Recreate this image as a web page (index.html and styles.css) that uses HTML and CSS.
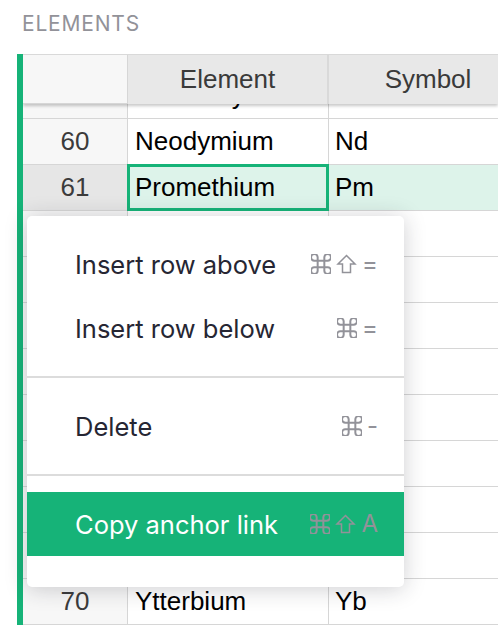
FILE: index.html
```html
<!DOCTYPE html>
<html>
<head>
<meta charset="utf-8">
<link rel="stylesheet" href="styles.css">
</head>
<body>
<div class="page">
  <div class="title">ELEMENTS</div>
  <div class="grid">
    <div class="header">
      <div class="rownum"></div>
      <div class="col col-el">Element</div>
      <div class="col col-sym">Symbol</div>
    </div>
    <div class="body">
      <div class="row row-partial"><div class="rownum">59</div><div class="cell col-el">Praseodymium</div><div class="cell col-sym">Pr</div></div>
      <div class="row"><div class="rownum">60</div><div class="cell col-el">Neodymium</div><div class="cell col-sym">Nd</div></div>
      <div class="row row-active"><div class="rownum">61</div><div class="cell col-el cell-cursor">Promethium</div><div class="cell col-sym">Pm</div></div>
      <div class="row"><div class="rownum">62</div><div class="cell col-el">Samarium</div><div class="cell col-sym">Sm</div></div>
      <div class="row"><div class="rownum">63</div><div class="cell col-el">Europium</div><div class="cell col-sym">Eu</div></div>
      <div class="row"><div class="rownum">64</div><div class="cell col-el">Gadolinium</div><div class="cell col-sym">Gd</div></div>
      <div class="row"><div class="rownum">65</div><div class="cell col-el">Terbium</div><div class="cell col-sym">Tb</div></div>
      <div class="row"><div class="rownum">66</div><div class="cell col-el">Dysprosium</div><div class="cell col-sym">Dy</div></div>
      <div class="row"><div class="rownum">67</div><div class="cell col-el">Holmium</div><div class="cell col-sym">Ho</div></div>
      <div class="row"><div class="rownum">68</div><div class="cell col-el">Erbium</div><div class="cell col-sym">Er</div></div>
      <div class="row"><div class="rownum">69</div><div class="cell col-el">Thulium</div><div class="cell col-sym">Tm</div></div>
      <div class="row"><div class="rownum">70</div><div class="cell col-el">Ytterbium</div><div class="cell col-sym">Yb</div></div>
    </div>
  </div>

  <div class="menu">
    <div class="menu-item">
      <span class="label">Insert row above</span>
      <span class="keys">
        <svg class="key-icon" viewBox="3 3 18 18"><path d="M15 6v12a3 3 0 1 0 3-3H6a3 3 0 1 0 3 3V6a3 3 0 1 0-3 3h12a3 3 0 1 0-3-3"/></svg>
        <svg class="key-icon key-shift" viewBox="0 0 20 20"><path d="M10 1.5 L18.5 10 L14 10 L14 18.5 L6 18.5 L6 10 L1.5 10 Z"/></svg>
        <span class="key-char">=</span>
      </span>
    </div>
    <div class="menu-item">
      <span class="label">Insert row below</span>
      <span class="keys">
        <svg class="key-icon" viewBox="3 3 18 18"><path d="M15 6v12a3 3 0 1 0 3-3H6a3 3 0 1 0 3 3V6a3 3 0 1 0-3 3h12a3 3 0 1 0-3-3"/></svg>
        <span class="key-char">=</span>
      </span>
    </div>
    <div class="menu-sep"></div>
    <div class="menu-item">
      <span class="label">Delete</span>
      <span class="keys">
        <svg class="key-icon" viewBox="3 3 18 18"><path d="M15 6v12a3 3 0 1 0 3-3H6a3 3 0 1 0 3 3V6a3 3 0 1 0-3 3h12a3 3 0 1 0-3-3"/></svg>
        <span class="key-char">-</span>
      </span>
    </div>
    <div class="menu-sep"></div>
    <div class="menu-item menu-item-active">
      <span class="label">Copy anchor link</span>
      <span class="keys">
        <svg class="key-icon" viewBox="3 3 18 18"><path d="M15 6v12a3 3 0 1 0 3-3H6a3 3 0 1 0 3 3V6a3 3 0 1 0-3 3h12a3 3 0 1 0-3-3"/></svg>
        <svg class="key-icon key-shift" viewBox="0 0 20 20"><path d="M10 1.5 L18.5 10 L14 10 L14 18.5 L6 18.5 L6 10 L1.5 10 Z"/></svg>
        <span class="key-char">A</span>
      </span>
    </div>
  </div>
</div>
</body>
</html>
```
FILE: styles.css
```css
html, body {
  margin: 0;
  padding: 0;
  background: #ffffff;
}
body {
  width: 498px;
  height: 625px;
  overflow: hidden;
  font-family: "Liberation Sans", Arial, sans-serif;
}
.page {
  position: relative;
  width: 498px;
  height: 625px;
  overflow: hidden;
}
.title {
  height: 54px;
  box-sizing: border-box;
  padding: 12px 0 0 22px;
  font-family: Inter, "Noto Sans", sans-serif;
  font-size: 21px;
  letter-spacing: 0.8px;
  color: #929299;
  line-height: 24px;
}
.grid {
  margin-left: 17px;
  border-left: 6px solid #16b378;
  height: 571px;
  overflow: hidden;
  display: flex;
  flex-direction: column;
}
.header {
  position: relative;
  z-index: 2;
  display: flex;
  flex: none;
  height: 50px;
  box-sizing: border-box;
  border-top: 1px solid #d9d9d9;
  box-shadow: 0 2px 3px rgba(0, 0, 0, 0.22);
}
.rownum {
  flex: none;
  width: 104px;
  border-right: 1px solid #d6d6d6;
  background: #f7f7f7;
  display: flex;
  align-items: center;
  justify-content: center;
  font-size: 26px;
  color: #3b3b3b;
}
.header .rownum {
  background: #f7f7f7;
  border-bottom: 1px solid #d6d6d6;
}
.col {
  flex: none;
  width: 200px;
  border-right: 2px solid #d9d9d9;
  box-sizing: border-box;
  background: #e8e8e8;
  display: flex;
  align-items: center;
  justify-content: center;
  font-size: 26px;
  color: #3a3a3a;
}
.header .col-el {
  width: 201px;
}
.body {
  flex: 1;
  overflow: hidden;
}
.row {
  display: flex;
  height: 46px;
  box-sizing: border-box;
  border-bottom: 1px solid #d6d6d6;
}
.row-partial {
  margin-top: -31px;
}
.cell {
  flex: none;
  box-sizing: border-box;
  display: flex;
  align-items: center;
  font-size: 26px;
  color: #000000;
  background: #ffffff;
}
.row .col-el {
  width: 201px;
  padding-left: 7px;
  border-right: 1px solid #d6d6d6;
}
.row .col-sym {
  width: 200px;
  padding-left: 6px;
}
.row-active .rownum {
  background: #e6e6e6;
}
.row-active .cell {
  background: #ddf3ea;
}
.cell-cursor {
  position: relative;
}
.cell-cursor::after {
  content: "";
  position: absolute;
  left: -1px;
  top: -1px;
  right: -1px;
  bottom: -1px;
  border: 3px solid #16b378;
}

/* context menu */
.menu {
  position: absolute;
  left: 27px;
  top: 216px;
  width: 377px;
  height: 371px;
  box-sizing: border-box;
  padding: 16px 0 31px 0;
  background: #ffffff;
  border-radius: 5px;
  box-shadow: 0 2px 22px rgba(38, 38, 51, 0.22);
  z-index: 10;
  font-family: Inter, "Noto Sans", sans-serif;
}
.menu-item {
  height: 64px;
  display: flex;
  align-items: center;
  justify-content: space-between;
  padding: 0 26px 0 48px;
  font-size: 25.5px;
  color: #262633;
}
.menu-item-active {
  background: #16b378;
  color: #ffffff;
}
.keys {
  display: flex;
  align-items: center;
  gap: 5px;
  color: #929299;
}
.key-icon {
  width: 20px;
  height: 20px;
  fill: none;
  stroke: #929299;
  stroke-width: 1.8;
  stroke-linejoin: miter;
}
.key-shift {
  width: 21px;
  height: 20px;
  stroke-width: 1.5;
}
.key-char {
  font-family: Inter, "Noto Sans", sans-serif;
  font-size: 24px;
  line-height: 24px;
  color: #929299;
}
.menu-sep {
  height: 2px;
  margin: 16px 0;
  background: #dcdcdc;
}
```
